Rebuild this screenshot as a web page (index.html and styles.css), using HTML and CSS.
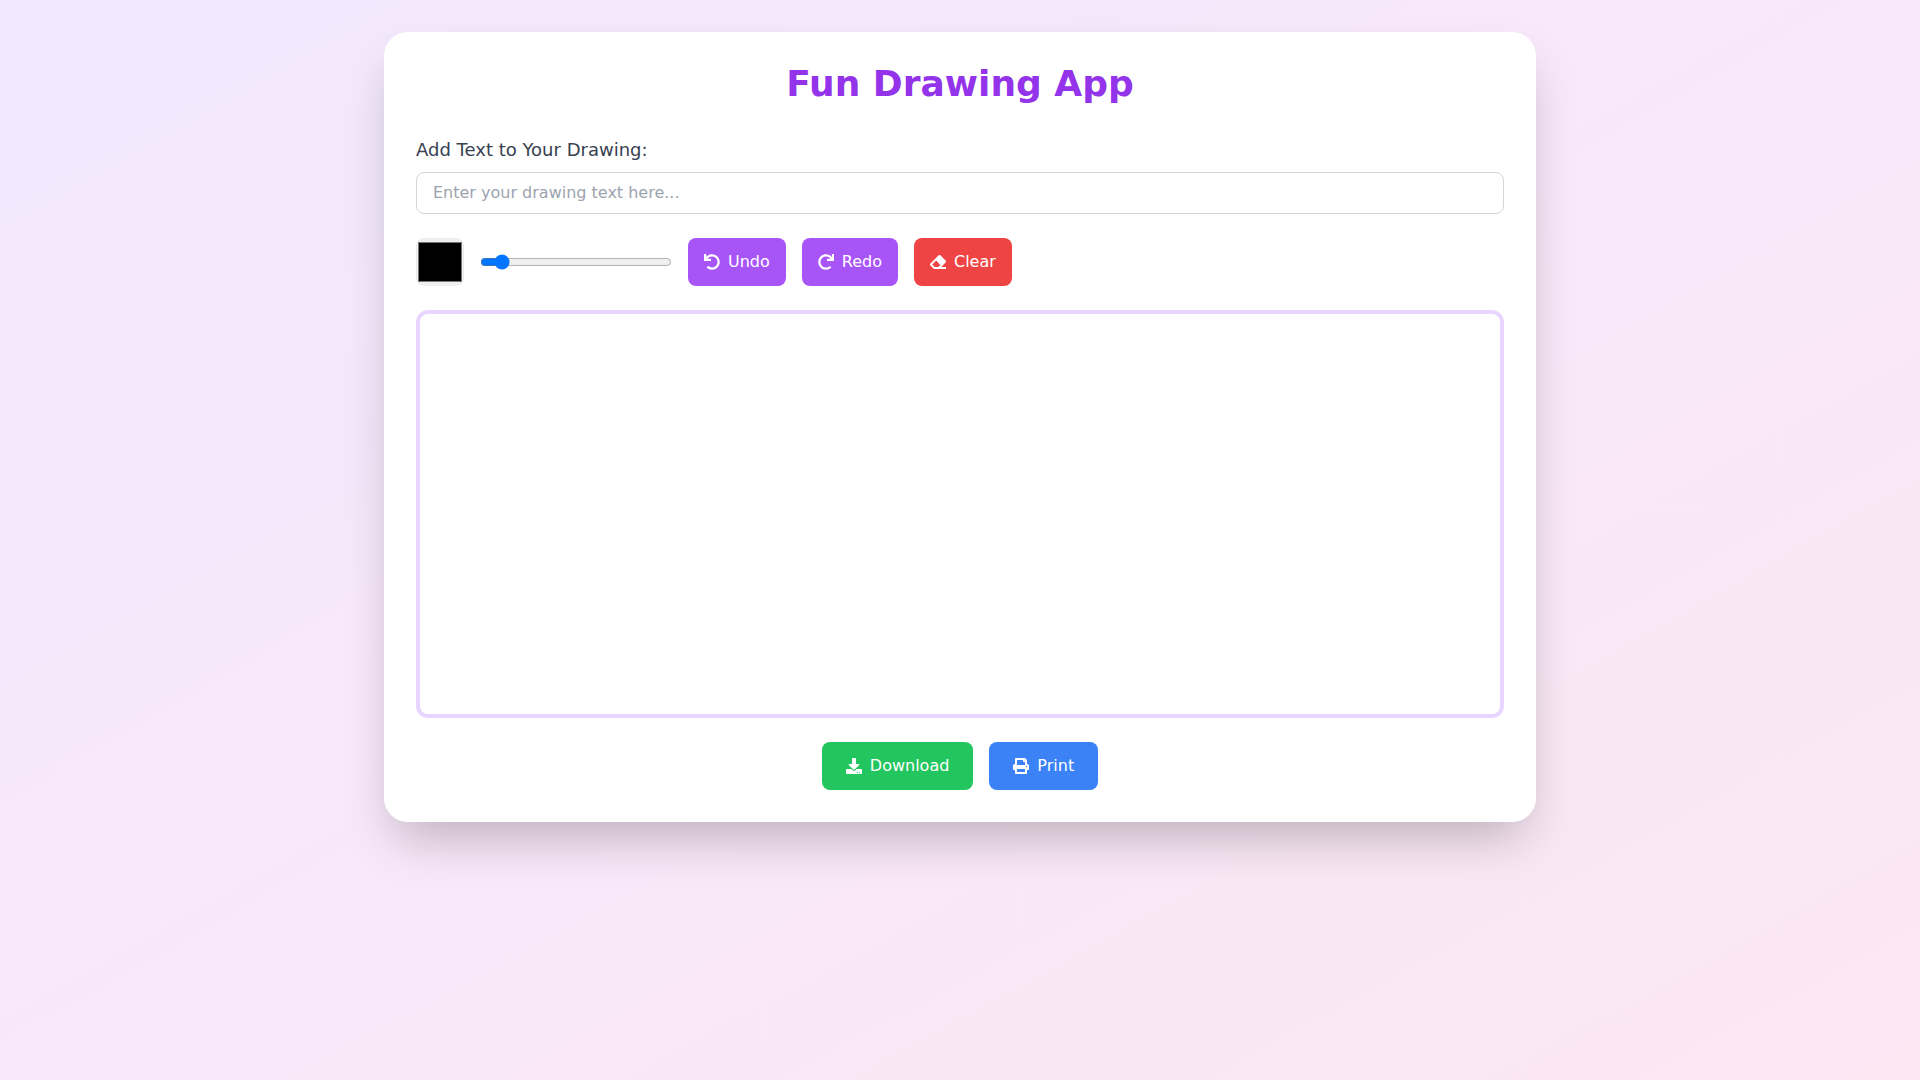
FILE: index.html
```html
<!DOCTYPE html>
<html lang="en">
<head>
    <meta charset="UTF-8">
    <meta name="viewport" content="width=device-width, initial-scale=1.0">
    <title>Fun Drawing App</title>
    <link rel="stylesheet" href="styles.css">
</head>
<body>
    <main class="container">
        <h1>Fun Drawing App</h1>

        <div class="text-field">
            <label for="drawingText">Add Text to Your Drawing:</label>
            <input type="text" id="drawingText" placeholder="Enter your drawing text here...">
        </div>

        <div class="toolbar">
            <input type="color" id="colorPicker" value="#000000" aria-label="Brush color">
            <input type="range" id="brushSize" min="1" max="50" value="5" aria-label="Brush size">
            <button type="button" class="btn btn-purple" id="undoBtn">
                <svg viewBox="0 0 512 512" aria-hidden="true"><path d="M212.333 224.333H12c-6.627 0-12-5.373-12-12V12C0 5.373 5.373 0 12 0h48c6.627 0 12 5.373 12 12v78.112C117.773 39.279 184.26 7.47 258.175 8.007c136.906.994 246.448 111.623 246.157 248.532C504.041 393.258 393.12 504 256.333 504c-64.089 0-122.496-24.313-166.51-64.215-5.099-4.622-5.334-12.554-.467-17.42l33.967-33.967c4.474-4.474 11.662-4.717 16.401-.525C170.76 415.336 211.58 432 256.333 432c97.268 0 176-78.716 176-176 0-97.267-78.716-176-176-176-58.496 0-110.28 28.476-142.274 72.333h98.274c6.627 0 12 5.373 12 12v48c0 6.627-5.373 12-12 12z"/></svg>
                Undo
            </button>
            <button type="button" class="btn btn-purple" id="redoBtn">
                <svg viewBox="0 0 512 512" aria-hidden="true"><path d="M500.33 0h-47.41a12 12 0 0 0-12 12.57l4 82.76A247.42 247.42 0 0 0 256 8C119.34 8 7.9 119.53 8 256.19 8.1 393.07 119.1 504 256 504a247.1 247.1 0 0 0 166.18-63.91 12 12 0 0 0 .48-17.43l-34-34a12 12 0 0 0-16.38-.55A176 176 0 1 1 402.1 157.8l-101.53-4.87a12 12 0 0 0-12.57 12v47.41a12 12 0 0 0 12 12h200.33a12 12 0 0 0 12-12V12a12 12 0 0 0-12-12z"/></svg>
                Redo
            </button>
            <button type="button" class="btn btn-red" id="clearBtn">
                <svg viewBox="0 0 512 512" aria-hidden="true"><path d="M497.941 273.941c18.745-18.745 18.745-49.137 0-67.882l-160-160c-18.745-18.745-49.136-18.746-67.883 0l-256 256c-18.745 18.745-18.745 49.137 0 67.882l96 96A48.004 48.004 0 0 0 144 480h356c6.627 0 12-5.373 12-12v-40c0-6.627-5.373-12-12-12H355.883l142.058-142.059zm-302.627-62.627l137.373 137.373L265.373 416H150.628l-80-80 124.686-124.686z"/></svg>
                Clear
            </button>
        </div>

        <canvas id="drawingCanvas"></canvas>

        <div class="actions">
            <button type="button" class="btn btn-wide btn-green" id="downloadBtn">
                <svg viewBox="0 0 512 512" aria-hidden="true"><path d="M216 0h80c13.3 0 24 10.7 24 24v168h87.7c17.8 0 26.7 21.5 14.1 34.1L269.7 378.3c-7.5 7.5-19.8 7.5-27.3 0L90.1 226.1c-12.6-12.6-3.7-34.1 14.1-34.1H192V24c0-13.3 10.7-24 24-24zm296 376v112c0 13.3-10.7 24-24 24H24c-13.3 0-24-10.7-24-24V376c0-13.3 10.7-24 24-24h146.7l49 49c20.1 20.1 52.5 20.1 72.6 0l49-49H488c13.3 0 24 10.7 24 24zm-124 88c0-11-9-20-20-20s-20 9-20 20 9 20 20 20 20-9 20-20zm64 0c0-11-9-20-20-20s-20 9-20 20 9 20 20 20 20-9 20-20z"/></svg>
                Download
            </button>
            <button type="button" class="btn btn-wide btn-blue" id="printBtn">
                <svg viewBox="0 0 512 512" aria-hidden="true"><path d="M448 192V77.25c0-8.49-3.37-16.62-9.37-22.63L393.37 9.37c-6-6-14.14-9.37-22.63-9.37H96C78.33 0 64 14.33 64 32v160c-35.35 0-64 28.65-64 64v112c0 8.84 7.16 16 16 16h48v96c0 17.67 14.33 32 32 32h320c17.67 0 32-14.33 32-32v-96h48c8.84 0 16-7.16 16-16V256c0-35.35-28.65-64-64-64zm-64 256H128v-96h256v96zm0-224H128V64h192v48c0 8.84 7.16 16 16 16h48v96zm48 72c-13.25 0-24-10.75-24-24 0-13.26 10.75-24 24-24s24 10.74 24 24c0 13.25-10.75 24-24 24z"/></svg>
                Print
            </button>
        </div>
    </main>
</body>
</html>
```
FILE: styles.css
```css
* {
    margin: 0;
    padding: 0;
    box-sizing: border-box;
}

body {
    font-family: 'DejaVu Sans', sans-serif;
    font-size: 16px;
    line-height: 24px;
    background: linear-gradient(to bottom right, #f3e8ff, #fce7f3);
    min-height: 100vh;
    padding: 32px;
}

input,
button {
    font: inherit;
    color: inherit;
}

/* White card around the whole app */
.container {
    max-width: 1152px;
    margin: 0 auto;
    padding: 32px;
    background: #ffffff;
    border-radius: 24px;
    box-shadow: 0 25px 50px -12px rgba(0, 0, 0, 0.25);
}

h1 {
    margin-bottom: 32px;
    font-size: 36px;
    line-height: 40px;
    font-weight: bold;
    text-align: center;
    color: #9333ea;
}

/* Text input */
.text-field {
    margin-bottom: 24px;
}

.text-field label {
    display: block;
    margin-bottom: 8px;
    font-size: 18px;
    line-height: 28px;
    color: #374151;
}

.text-field input {
    display: block;
    width: 100%;
    padding: 8px 16px;
    border: 1px solid #d1d5db;
    border-radius: 8px;
}

.text-field input::placeholder {
    color: #9ca3af;
}

/* Brush controls */
.toolbar {
    display: flex;
    flex-wrap: wrap;
    align-items: center;
    gap: 16px;
    margin-bottom: 24px;
}

.toolbar input[type="color"] {
    width: 48px;
    height: 48px;
    border: none;
    border-radius: 8px;
    cursor: pointer;
}

.toolbar input[type="range"] {
    width: 192px;
}

/* Buttons */
.btn {
    display: flex;
    align-items: center;
    gap: 8px;
    padding: 12px 16px;
    border: none;
    border-radius: 8px;
    color: #ffffff;
    cursor: pointer;
}

.btn svg {
    width: 16px;
    height: 16px;
    fill: currentColor;
}

.btn-wide {
    padding: 12px 24px;
}

.btn-purple {
    background: #a855f7;
}

.btn-purple:hover {
    background: #9333ea;
}

.btn-red {
    background: #ef4444;
}

.btn-red:hover {
    background: #dc2626;
}

.btn-green {
    background: #22c55e;
}

.btn-green:hover {
    background: #16a34a;
}

.btn-blue {
    background: #3b82f6;
}

.btn-blue:hover {
    background: #2563eb;
}

/* Drawing area */
canvas {
    display: block;
    width: 100%;
    height: 408px;
    margin-bottom: 24px;
    border: 4px solid #e9d5ff;
    border-radius: 12px;
    cursor: crosshair;
}

.actions {
    display: flex;
    flex-wrap: wrap;
    justify-content: center;
    gap: 16px;
}
```
